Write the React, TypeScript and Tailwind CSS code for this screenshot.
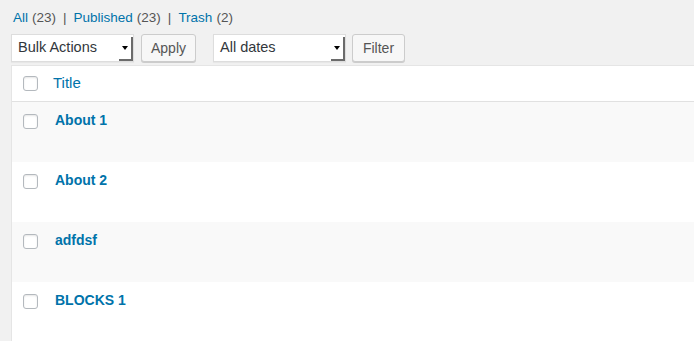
const rows = ["About 1", "About 2", "adfdsf", "BLOCKS 1"];

function Checkbox() {
  return (
    <span className="block h-[15px] w-[15px] shrink-0 rounded-[3px] border border-[#b4b9be] bg-white shadow-[inset_0_1px_2px_rgba(0,0,0,0.1)]" />
  );
}

function Select({ label, width }: { label: string; width: string }) {
  return (
    <div
      className={`flex h-[28px] items-center justify-between border border-[#ddd] bg-white pl-[6px] shadow-[0_1px_1px_rgba(0,0,0,0.04)] ${width}`}
    >
      <span className="text-[14.5px] text-[#32373c]">{label}</span>
      <span className="mt-[2px] flex h-[24px] w-[14px] items-center justify-center border-r-2 border-b-2 border-[#6b6b6b]">
        <span className="block h-0 w-0 border-x-[3px] border-t-[4px] border-x-transparent border-t-black" />
      </span>
    </div>
  );
}

function Button({ label, width }: { label: string; width: string }) {
  return (
    <button
      className={`h-[28px] rounded-[3px] border border-[#ccc] bg-[#f7f7f7] text-[14px] text-[#555] shadow-[0_1px_0_#ccc] ${width}`}
    >
      {label}
    </button>
  );
}

export default function App() {
  return (
    <div className="h-[341px] w-[694px] overflow-hidden bg-[#f1f1f1] font-['Liberation_Sans',Arial,sans-serif]">
      <div className="flex items-center pl-[13px] pt-[9px] text-[13.5px] leading-[18px] text-[#555]">
        <a className="text-[#0073aa]">All</a>
        <span className="ml-[4px]">(23)</span>
        <span className="mx-[7px]">|</span>
        <a className="text-[#0073aa]">Published</a>
        <span className="ml-[4px]">(23)</span>
        <span className="mx-[7px]">|</span>
        <a className="text-[#0073aa]">Trash</a>
        <span className="ml-[4px]">(2)</span>
      </div>

      <div className="mt-[7px] flex items-center pl-[11px]">
        <Select label="Bulk Actions" width="w-[123px]" />
        <div className="ml-[7px]">
          <Button label="Apply" width="w-[55px]" />
        </div>
        <div className="ml-[17px]">
          <Select label="All dates" width="w-[133px]" />
        </div>
        <div className="ml-[6px]">
          <Button label="Filter" width="w-[53px]" />
        </div>
      </div>

      <div className="ml-[11px] mt-[3px] w-[700px] border-l border-t border-[#e5e5e5] bg-white">
        <div className="flex h-[36px] items-center border-b border-[#e1e1e1] pl-[11px]">
          <Checkbox />
          <span className="ml-[15px] text-[15px] text-[#0073aa]">Title</span>
        </div>
        {rows.map((title, i) => (
          <div
            key={title}
            className={`flex h-[60px] items-start pl-[11px] pt-[12px] ${i % 2 === 0 ? "bg-[#f9f9f9]" : "bg-white"}`}
          >
            <Checkbox />
            <a className="-mt-[4px] ml-[17px] text-[14px] font-bold leading-[20px] text-[#0073aa]">
              {title}
            </a>
          </div>
        ))}
      </div>
    </div>
  );
}
